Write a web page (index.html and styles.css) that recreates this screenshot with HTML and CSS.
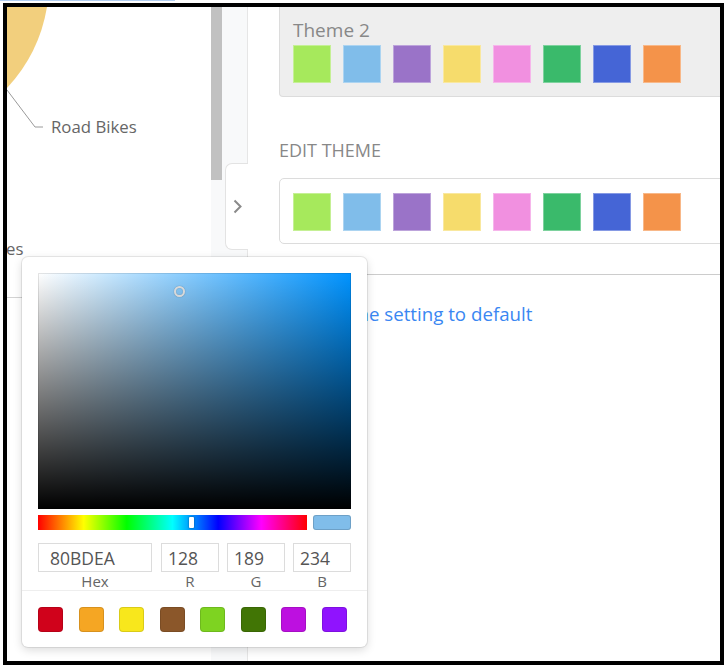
FILE: index.html
```html
<!DOCTYPE html>
<html>
<head>
<meta charset="utf-8">
<link rel="stylesheet" href="styles.css">
</head>
<body>
<div class="topline"></div>
<div class="frame">
  <div class="left">
    <div class="chart">
      <svg width="204" height="290" viewBox="0 0 204 290">
        <path d="M0 0 L40 0 A156.7 156.7 0 0 1 0 81 Z" fill="#f2cf7d"/>
        <polyline points="0,83 28,120 36,120" fill="none" stroke="#9a9a9a" stroke-width="1"/>
        <text x="44" y="126" class="lbl">Road Bikes</text>
        <text x="16.5" y="248" class="lbl" text-anchor="end">Mountain Bikes</text>
      </svg>
    </div>
  </div>
  <div class="scrollbar"><div class="thumb"></div></div>
  <div class="gutter">
    <div class="tab">
      <svg width="9" height="15" viewBox="0 0 9 15"><polyline points="1.5,1.5 7.5,7.5 1.5,13.5" fill="none" stroke="#8a8a8a" stroke-width="2"/></svg>
    </div>
  </div>
  <div class="right">
    <div class="card theme2">
      <div class="theme-name">Theme 2</div>
      <div class="swatches">
        <span class="sw c1"></span><span class="sw c2"></span><span class="sw c3"></span><span class="sw c4"></span>
        <span class="sw c5"></span><span class="sw c6"></span><span class="sw c7"></span><span class="sw c8"></span>
      </div>
    </div>
    <div class="edit-label">EDIT THEME</div>
    <div class="card edit">
      <div class="swatches">
        <span class="sw c1"></span><span class="sw c2"></span><span class="sw c3"></span><span class="sw c4"></span>
        <span class="sw c5"></span><span class="sw c6"></span><span class="sw c7"></span><span class="sw c8"></span>
      </div>
    </div>
    <div class="rule"></div>
    <a class="reset">Restore the setting to default</a>
  </div>

  <div class="picker">
    <div class="sat"><div class="pointer"></div></div>
    <div class="hue-row">
      <div class="hue"><div class="handle"></div></div>
      <div class="preview"></div>
    </div>
    <div class="fields">
      <div class="field hex"><input value="80BDEA"><span>Hex</span></div>
      <div class="field"><input value="128"><span>R</span></div>
      <div class="field"><input value="189"><span>G</span></div>
      <div class="field"><input value="234"><span>B</span></div>
    </div>
    <div class="presets">
      <span class="ps" style="background:#d0021b"></span>
      <span class="ps" style="background:#f5a623"></span>
      <span class="ps" style="background:#f8e71c"></span>
      <span class="ps" style="background:#8b572a"></span>
      <span class="ps" style="background:#7ed321"></span>
      <span class="ps" style="background:#417505"></span>
      <span class="ps" style="background:#bd10e0"></span>
      <span class="ps" style="background:#9013fe"></span>
    </div>
  </div>
</div>
</body>
</html>
```

FILE: styles.css
```css
html, body {
  margin: 0;
  padding: 0;
  background: #fff;
  font-family: "Open Sans", "Noto Sans", sans-serif;
}
.topline {
  width: 175px;
  height: 1px;
  background: #b3cff2;
}
.frame {
  margin: 2px 0 0 3px;
  width: 713px;
  height: 654px;
  border: 4px solid #000;
  display: flex;
  position: relative;
  overflow: hidden;
  background: #fff;
}
.left {
  width: 204px;
  flex: none;
  background: #fff;
}
.chart {
  height: 290px;
  border-bottom: 1px solid #d3d3d3;
}
.chart svg { display: block; }
.lbl {
  font-family: "Open Sans", sans-serif;
  font-size: 16.8px;
  fill: #666;
}
.scrollbar {
  width: 11px;
  flex: none;
  background: #f8f9fa;
}
.thumb {
  height: 173px;
  background: #c1c1c1;
}
.gutter {
  width: 25px;
  flex: none;
  background: #f8f9fa;
  padding-top: 156px;
  box-sizing: border-box;
  position: relative;
  z-index: 1;
}
.tab {
  margin-left: 3px;
  width: 23px;
  height: 87px;
  background: #fff;
  border: 1px solid #e3e3e3;
  border-right: none;
  border-radius: 7px 0 0 7px;
  box-sizing: border-box;
  display: flex;
  align-items: center;
  justify-content: center;
}
.tab svg { display: block; margin-left: 1px; }
.right {
  width: 473px;
  flex: none;
  border-left: 1px solid #e6e6e6;
  box-sizing: border-box;
  padding-left: 31px;
  overflow: hidden;
}
.card {
  width: 460px;
  box-sizing: border-box;
}
.theme2 {
  background: #eeeeee;
  border: 1px solid #dcdcdc;
  border-top: none;
  border-radius: 0 0 4px 4px;
  padding: 11px 0 13px 13px;
}
.theme-name {
  font-size: 19px;
  line-height: 24px;
  color: #888;
}
.swatches {
  display: flex;
  gap: 12px;
}
.theme2 .swatches { margin-top: 3px; }
.sw {
  width: 38px;
  height: 38px;
  box-shadow: inset 0 0 0 1px rgba(255,255,255,0.35);
}
.c1 { background: #a6e95c; }
.c2 { background: #80bdea; }
.c3 { background: #9a73c8; }
.c4 { background: #f6dc6c; }
.c5 { background: #f190e0; }
.c6 { background: #3aba6b; }
.c7 { background: #4565d6; }
.c8 { background: #f4934a; }
.edit-label {
  margin-top: 41px;
  font-size: 18px;
  line-height: 24px;
  color: #888;
  margin-bottom: 16px;
}
.edit {
  border: 1px solid #dcdcdc;
  border-radius: 5px;
  padding: 14px 0 12px 13px;
}
.rule {
  margin: 30px 0 0 -31px;
  height: 1px;
  background: #cccccc;
}
.reset {
  display: block;
  margin-top: 26px;
  font-size: 18.7px;
  line-height: 26px;
  color: #3a87f2;
  white-space: nowrap;
}
.picker {
  position: absolute;
  left: 15px;
  top: 250px;
  width: 345px;
  height: 390px;
  box-sizing: border-box;
  padding: 16px 16px 0;
  background: #fff;
  border-radius: 6px;
  box-shadow: 0 0 0 1px rgba(0,0,0,0.08), 0 3px 10px rgba(0,0,0,0.15);
  z-index: 5;
}
.sat {
  position: relative;
  height: 236px;
  background:
    linear-gradient(to top, #000, rgba(0,0,0,0)),
    linear-gradient(to right, #fff, rgb(0,147,255));
  box-shadow: inset 0 0 0 1px rgba(0,0,0,0.1);
}
.pointer {
  position: absolute;
  left: 136px;
  top: 13px;
  width: 7px;
  height: 7px;
  border: 2.5px solid #d8d8d8;
  border-radius: 50%;
  box-shadow: 0 0 1px rgba(0,0,0,0.5), inset 0 0 1px rgba(0,0,0,0.4);
}
.hue-row {
  display: flex;
  gap: 6px;
  margin-top: 6px;
  height: 15px;
}
.hue {
  flex: 1;
  position: relative;
  background: linear-gradient(to right, #f00 0%, #ff0 17%, #0f0 33%, #0ff 50%, #00f 67%, #f0f 83%, #f00 100%);
}
.handle {
  position: absolute;
  left: 151px;
  top: 2px;
  width: 5px;
  height: 11px;
  background: #fff;
  border-radius: 1px;
  box-shadow: 0 0 2px rgba(0,0,0,0.5);
}
.preview {
  width: 38px;
  flex: none;
  background: #80bdea;
  border-radius: 3px;
  box-shadow: inset 0 0 0 1px rgba(0,0,0,0.15);
}
.fields {
  display: flex;
  gap: 8px;
  margin-top: 13px;
}
.field {
  display: flex;
  flex-direction: column;
  width: 58px;
}
.field.hex {
  width: 114px;
  margin-right: 1px;
}
.field input {
  height: 29px;
  box-sizing: border-box;
  width: 100%;
  border: 1px solid #dcdcdc;
  padding: 0 0 0 6px;
  margin: 0;
  font-family: inherit;
  font-size: 17.5px;
  color: #555;
  outline: none;
}
.field.hex input { padding-left: 11px; }
.field span {
  text-align: center;
  font-size: 15px;
  line-height: 18px;
  color: #666;
}
.presets {
  margin: 0 -16px;
  border-top: 1px solid #eeeeee;
  padding: 16px 20px 15px 16px;
  display: flex;
  justify-content: space-between;
}
.ps {
  width: 25px;
  height: 25px;
  border-radius: 4px;
  box-shadow: inset 0 0 0 1px rgba(0,0,0,0.12);
}
```
